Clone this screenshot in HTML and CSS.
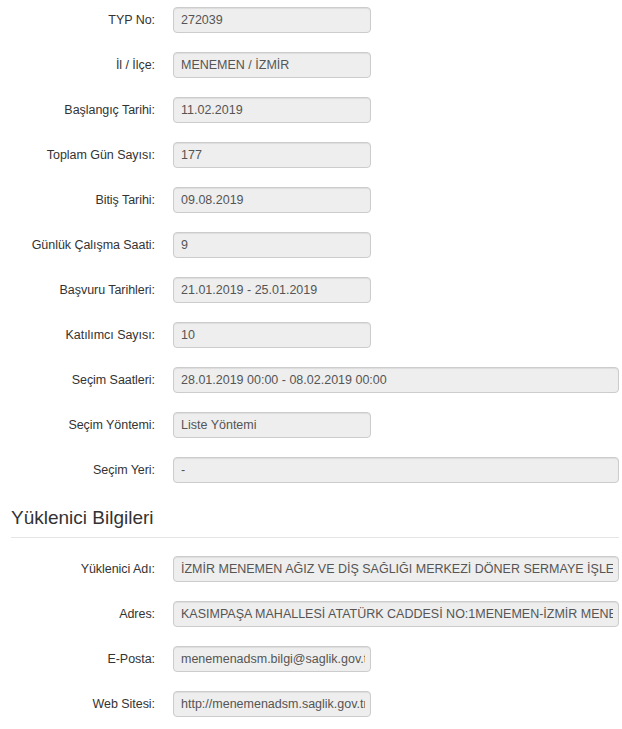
FILE: index.html
```html
<!DOCTYPE html>
<html lang="tr">
<head>
<meta charset="utf-8">
<title>TYP Bilgileri</title>
<link rel="stylesheet" href="styles.css">
</head>
<body>
<div class="page">
  <div class="form">
    <div class="row"><label class="label">TYP No:</label><div class="field short"><span class="val">272039</span></div></div>
    <div class="row"><label class="label">İl / İlçe:</label><div class="field short"><span class="val">MENEMEN / İZMİR</span></div></div>
    <div class="row"><label class="label">Başlangıç Tarihi:</label><div class="field short"><span class="val">11.02.2019</span></div></div>
    <div class="row"><label class="label">Toplam Gün Sayısı:</label><div class="field short"><span class="val">177</span></div></div>
    <div class="row"><label class="label">Bitiş Tarihi:</label><div class="field short"><span class="val">09.08.2019</span></div></div>
    <div class="row"><label class="label">Günlük Çalışma Saati:</label><div class="field short"><span class="val">9</span></div></div>
    <div class="row"><label class="label">Başvuru Tarihleri:</label><div class="field short"><span class="val">21.01.2019 - 25.01.2019</span></div></div>
    <div class="row"><label class="label">Katılımcı Sayısı:</label><div class="field short"><span class="val">10</span></div></div>
    <div class="row"><label class="label">Seçim Saatleri:</label><div class="field wide"><span class="val">28.01.2019 00:00 - 08.02.2019 00:00</span></div></div>
    <div class="row"><label class="label">Seçim Yöntemi:</label><div class="field short"><span class="val">Liste Yöntemi</span></div></div>
    <div class="row"><label class="label">Seçim Yeri:</label><div class="field wide"><span class="val">-</span></div></div>
  </div>

  <h3 class="section-title">Yüklenici Bilgileri</h3>

  <div class="form">
    <div class="row"><label class="label">Yüklenici Adı:</label><div class="field wide"><span class="val">İZMİR MENEMEN AĞIZ VE DİŞ SAĞLIĞI MERKEZİ DÖNER SERMAYE İŞLETMESİ</span></div></div>
    <div class="row"><label class="label">Adres:</label><div class="field wide"><span class="val">KASIMPAŞA MAHALLESİ ATATÜRK CADDESİ NO:1MENEMEN-İZMİR MENEMEN</span></div></div>
    <div class="row"><label class="label">E-Posta:</label><div class="field short"><span class="val">menemenadsm.bilgi@saglik.gov.tr</span></div></div>
    <div class="row"><label class="label">Web Sitesi:</label><div class="field short"><span class="val">http://menemenadsm.saglik.gov.tr</span></div></div>
  </div>
</div>
</body>
</html>
```

FILE: styles.css
```css
* { box-sizing: border-box; }

html, body {
  margin: 0;
  padding: 0;
  background: #fff;
}

body {
  font-family: "Liberation Sans", Arial, Helvetica, sans-serif;
  font-size: 12.5px;
  color: #333;
}

.page {
  padding: 7px 3px 0 11px;
}

.form {
  display: flex;
  flex-direction: column;
  gap: 19px;
}

.row {
  display: flex;
  align-items: center;
  height: 26px;
}

.label {
  width: 144px;
  text-align: right;
  color: #333;
  white-space: nowrap;
  letter-spacing: -0.05px;
}

.field {
  margin-left: 18px;
  height: 26px;
  display: flex;
  align-items: center;
  padding: 0 5px 0 7px;
  background: #eee;
  border: 1px solid #ccc;
  border-radius: 4px;
  color: #555;
  box-shadow: inset 0 1px 1px rgba(0, 0, 0, 0.075);
}

.val {
  display: block;
  overflow: hidden;
  white-space: nowrap;
  width: 100%;
}

.short { width: 198px; }
.wide { width: 446px; }

.section-title {
  margin: 24px 0 18px 0;
  padding-bottom: 8px;
  border-bottom: 1px solid #e5e5e5;
  font-size: 19px;
  line-height: 22px;
  font-weight: normal;
  color: #333;
}
```
